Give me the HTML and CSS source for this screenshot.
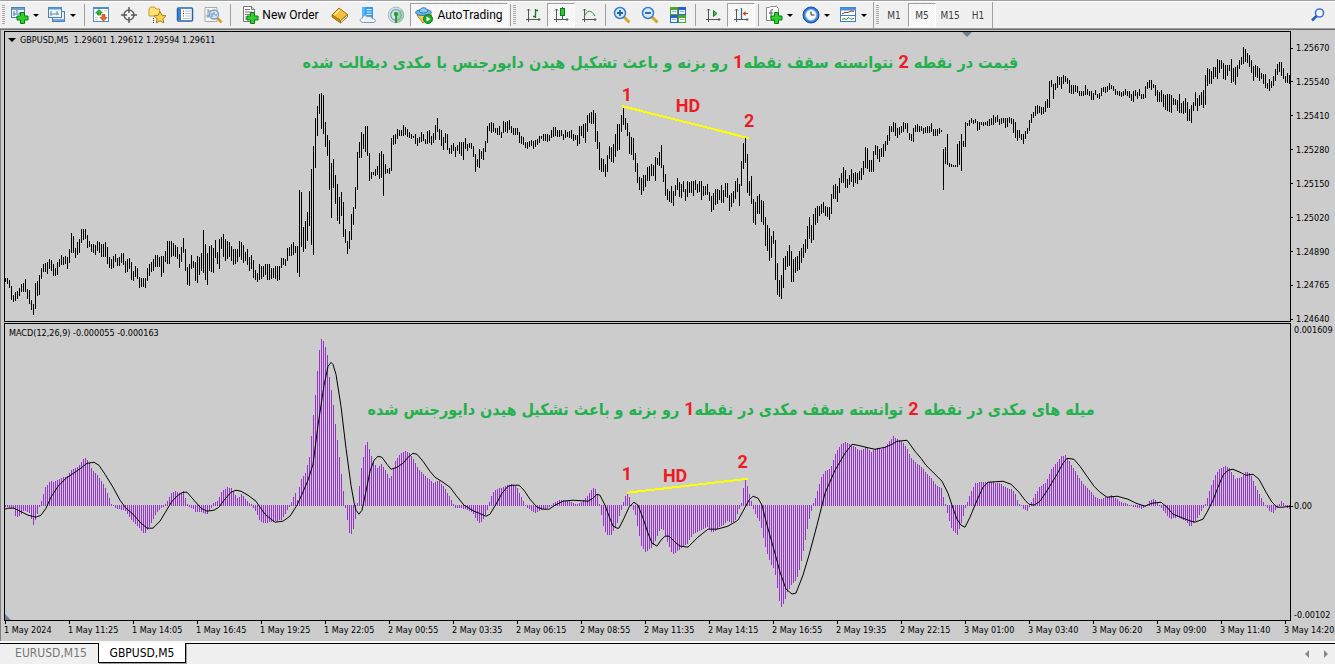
FILE: index.html
```html
<!DOCTYPE html>
<html lang="en">
<head>
<meta charset="utf-8">
<title>GBPUSD,M5</title>
<link rel="stylesheet" href="styles.css">
</head>
<body>
<header class="toolbar">
  <span class="grip"></span>
  <button class="tool drop" aria-label="New chart">
    <svg width="18" height="18" viewBox="0 0 18 18"><rect x=".5" y="1.5" width="13" height="10" fill="#eaf3fc" stroke="#4a82b8"/><path d="M1 3h12" stroke="#6fa0d0" stroke-width="2"/><path d="M3 5v5M2 8h9M6 4v3M9 6v3" stroke="#54799c" fill="none"/><path d="M9.5 6.500h4v3.500h3.500v4h-3.500v3.500h-4v-3.500H6v-4h3.500z" fill="#2fd12f" stroke="#0b7d12"/></svg>
    <i class="caret"></i></button>
  <button class="tool drop" aria-label="Profiles">
    <svg width="18" height="18" viewBox="0 0 18 18"><rect x="4.500" y="5.500" width="12" height="10" fill="#e6f1fb" stroke="#4a82b8"/><path d="M5 14h11" stroke="#76a7d8" stroke-width="2"/><rect x=".5" y="1.500" width="13" height="10" fill="#eef6fd" stroke="#4a82b8"/><path d="M1 2.500h12" stroke="#5a96d2" stroke-width="2"/><path d="M3 5v5M2 8h9M9 5v4" stroke="#6889a6" fill="none"/></svg>
    <i class="caret"></i></button>
  <span class="sep"></span>
  <button class="tool" aria-label="Market watch"><svg width="18" height="18" viewBox="0 0 18 18"><rect x="1.500" y="1.500" width="15" height="14" fill="#fff" stroke="#4f8fc9"/><path d="M2 2.500h14" stroke="#4f8fc9"/><path d="M3.500 7L7 3.500 10.500 7H8.500v2h-3V7z" fill="#2eb82e" stroke="#197519" stroke-width=".7"/><path d="M8 11.500l3.500 3.500 3.500-3.500h-2v-3h-3v3z" fill="#f0692c" stroke="#b83c10" stroke-width=".7"/><path d="M3 11.500h3M3 13.500h3M12 5h3" stroke="#ccc"/></svg></button>
  <button class="tool" aria-label="Crosshair"><svg width="18" height="18" viewBox="0 0 18 18"><circle cx="9" cy="9" r="5" fill="none" stroke="#666" stroke-width="1.600"/><path d="M9 1v6M9 11v6M1 9h6M11 9h6" stroke="#555" stroke-width="1.400"/></svg></button>
  <button class="tool" aria-label="Navigator"><svg width="20" height="18" viewBox="0 0 20 18"><path d="M2 3l1.500-2h4L9 3h3.500v7h-10.500z" fill="#ffe37a" stroke="#c99a1e"/><path d="M6.500 12v5" stroke="#222" stroke-dasharray="1 1"/><path d="M13 5.500l1.900 3.700 4.100.6-3 2.900.8 4.200-3.800-2-3.700 2 .7-4.200-3-2.900 4.200-.6z" fill="#fbd145" stroke="#b07c1a"/></svg></button>
  <button class="tool" aria-label="Data window"><svg width="18" height="18" viewBox="0 0 18 18"><rect x="1.500" y="2" width="15" height="13" rx="1" fill="#fff" stroke="#2464ae" stroke-width="1.500"/><path d="M3.500 2.500v12" stroke="#3c7fcc" stroke-width="3"/><path d="M7 5h1M7 7.500h1M7 10h1" stroke="#d22"/><path d="M9 5h6M9 7.500h6M9 10h6M7 12.500h8" stroke="#b5c3d8"/></svg></button>
  <button class="tool" aria-label="Strategy tester"><svg width="20" height="18" viewBox="0 0 20 18"><path d="M2 1.500h12v14H2z" fill="#f8f8f8" stroke="#aaa"/><path d="M5 3v9M3 10h9M5 5h7" stroke="#7b93a8"/><circle cx="11" cy="8.500" r="4.500" fill="#cfe5f8" fill-opacity=".85" stroke="#7d9dbb" stroke-width="1.300"/><path d="M9 7v4M11 6v3M13 8v2" stroke="#5588b5"/><path d="M14.500 12l4 4.500" stroke="#d39b20" stroke-width="2.600"/></svg></button>
  <span class="sep roomy"></span>
  <button class="tool order"><svg width="18" height="18" viewBox="0 0 18 18"><path d="M2.500.5h8l3 3v12h-11z" fill="#fff" stroke="#777"/><path d="M10.500.5v3h3" fill="#ddd" stroke="#777"/><path d="M4 3.500h5M4 6h7M4 8.500h5M4 11h3M4 13h3" stroke="#777"/><path d="M9.500 6.500h4v3.500h3.500v4h-3.500v3.500h-4v-3.500H6v-4h3.500z" fill="#2fd12f" stroke="#0b7d12"/></svg><span>New Order</span></button>
  <button class="tool" aria-label="MetaEditor"><svg width="18" height="18" viewBox="0 0 18 18"><path d="M1 9l7-7 8.500 6.500-7 6z" fill="#f3c13c" stroke="#a8700c"/><path d="M1 9v2l8.500 6v-2.500z" fill="#c98d17" stroke="#98650c" stroke-width=".8"/><path d="M9.500 15v2l7-6V8.500z" fill="#fff3c4" stroke="#98650c" stroke-width=".8"/><path d="M4 8.500L8.500 4" stroke="#fff0a8" stroke-width="1.500"/></svg></button>
  <button class="tool" aria-label="Cloud"><svg width="18" height="18" viewBox="0 0 18 18"><path d="M3 1h11v11H3z" fill="#2b9cf2"/><path d="M3 1h3v11H3z" fill="#53b8ff"/><path d="M7.500 3.500h5M7.500 6h5M7.500 8.500h5" stroke="#fff" fill="none"/><path d="M4.500 16.500c-4.500 0-4-4.500-1-4.500 0-3 4-3 5-1 2.500-1.500 4.500 0 4.500 1.500 4.500 0 4 4 1 4z" fill="#eff3fa" stroke="#7e95b5"/></svg></button>
  <button class="tool" aria-label="Signals"><svg width="18" height="18" viewBox="0 0 18 18"><circle cx="9" cy="9" r="7.800" fill="#d9e3ea" stroke="#a9bac4"/><circle cx="9" cy="9" r="5.300" fill="none" stroke="#6fa0b5" stroke-width="1.300"/><path d="M9 9v8a8 8 0 0 0 5-14z" fill="#7cc27c" fill-opacity=".55"/><circle cx="9" cy="8" r="2.200" fill="#2f9a3c"/><path d="M9 9v8" stroke="#2f9a3c" stroke-width="2"/></svg></button>
  <button class="tool auto pressed"><svg width="18" height="18" viewBox="0 0 18 18"><path d="M2 9l6 8 9-8z" fill="#f2cf4e" stroke="#b78a15"/><ellipse cx="8.500" cy="6.500" rx="8" ry="3" fill="#6db5e6" stroke="#2c78b0"/><path d="M4.500 5.500c0-5 8-5 8 0 0 1.800-8 1.800-8 0z" fill="#8ccbf2" stroke="#2c78b0"/><circle cx="13" cy="13" r="4.500" fill="#1fae2c" stroke="#0b7a15"/><path d="M11.500 10.500l4 2.500-4 2.500z" fill="#fff"/></svg><span>AutoTrading</span></button>
  <span class="sep"></span>
  <span class="grip spaced"></span>
  <button class="tool" aria-label="Bar chart"><svg width="18" height="18" viewBox="0 0 18 18"><path d="M4.500 3v13M2 13.500h14M3 4.500l1.500-1.500 1.500 1.500M14.500 12l1.500 1.500-1.500 1.500" stroke="#555" fill="none"/><path d="M11.500 3v9M11 4.500h3M9 10.500h3" stroke="#137c1f" stroke-width="1.300"/></svg></button>
  <button class="tool pressed" aria-label="Candlesticks"><svg width="18" height="18" viewBox="0 0 18 18"><path d="M4.500 3v13M2 13.500h14M3 4.500l1.500-1.500 1.500 1.500M14.500 12l1.500 1.500-1.500 1.500" stroke="#555" fill="none"/><path d="M10.500 1v12" stroke="#137c1f"/><rect x="8.500" y="2.500" width="4" height="7" fill="#25c936" stroke="#137c1f"/></svg></button>
  <button class="tool" aria-label="Line chart"><svg width="18" height="18" viewBox="0 0 18 18"><path d="M4.500 3v13M2 13.500h14M3 4.500l1.500-1.500 1.500 1.500M14.500 12l1.500 1.500-1.500 1.500" stroke="#555" fill="none"/><path d="M4 11c3-7 7-8 11-1" stroke="#23953a" fill="none"/></svg></button>
  <span class="sep"></span>
  <button class="tool" aria-label="Zoom in"><svg width="18" height="18" viewBox="0 0 18 18"><path d="M11 11l5.500 5.500" stroke="#d6a62b" stroke-width="3"/><circle cx="7" cy="7" r="5.500" fill="#d5ebfc" stroke="#3a7cc5" stroke-width="1.500"/><path d="M4 7h6M7 4v6" stroke="#1d60b3" stroke-width="1.800"/></svg></button>
  <button class="tool" aria-label="Zoom out"><svg width="18" height="18" viewBox="0 0 18 18"><path d="M11 11l5.500 5.500" stroke="#d6a62b" stroke-width="3"/><circle cx="7" cy="7" r="5.500" fill="#d5ebfc" stroke="#3a7cc5" stroke-width="1.500"/><path d="M4 7h6" stroke="#1d60b3" stroke-width="1.800"/></svg></button>
  <button class="tool" aria-label="Tile windows"><svg width="18" height="18" viewBox="0 0 18 18"><path d="M1 1h8v8H1zM9 9h8v8H9z" fill="#4fa524"/><path d="M9 1h8v8H9zM1 9h8v8H1z" fill="#2b62d0"/><path d="M2 4h6v4H2zM10 4h6v4h-6zM2 12h6v4H2zM10 12h6v4h-6z" fill="#eef5fb"/><path d="M3 5.500h4M11 5.500h4M3 13.500h4M11 13.500h4" stroke="#8fb3c0"/></svg></button>
  <span class="sep roomy"></span>
  <button class="tool" aria-label="Auto scroll"><svg width="18" height="18" viewBox="0 0 18 18"><path d="M4.500 3v13M2 13.500h14M3 4.500l1.500-1.500 1.500 1.500M14.500 12l1.500 1.500-1.500 1.500" stroke="#555" fill="none"/><path d="M9.500 4.500l3.500 3-3.500 3z" fill="#3bd04b" stroke="#137c1f"/></svg></button>
  <button class="tool pressed" aria-label="Chart shift"><svg width="18" height="18" viewBox="0 0 18 18"><path d="M4.500 3v13M2 13.500h14M3 4.500l1.500-1.500 1.500 1.500M14.500 12l1.500 1.500-1.500 1.500" stroke="#555" fill="none"/><path d="M9.500 2v11" stroke="#1c6bb0" stroke-width="1.300"/><path d="M11 7.500h5" stroke="#b33a10"/><path d="M10.500 7.500l3-2.500v5z" fill="#d0410e"/></svg></button>
  <span class="sep roomy"></span>
  <button class="tool drop" aria-label="Indicators"><svg width="18" height="18" viewBox="0 0 18 18"><path d="M1.500 1.500h3l1-1h6l2 2v12h-12z" fill="#fff" stroke="#888"/><path d="M8 4c-2-1-2 0-2 2v6M4 7h4" stroke="#555" fill="none"/><path d="M9.500 6.500h4v3.500h3.500v4h-3.500v3.500h-4v-3.500H6v-4h3.500z" fill="#2fd12f" stroke="#0b7d12"/></svg><i class="caret"></i></button>
  <button class="tool drop" aria-label="Periods"><svg width="18" height="18" viewBox="0 0 18 18"><circle cx="9" cy="9" r="8" fill="#2d7fdb" stroke="#1c4f96"/><circle cx="9" cy="9" r="5.500" fill="#f6faff" stroke="#8bb9ec"/><path d="M9 5.500V9h3.500" stroke="#333" fill="none"/></svg><i class="caret"></i></button>
  <button class="tool drop" aria-label="Templates"><svg width="18" height="18" viewBox="0 0 18 18"><rect x="1.500" y="1.500" width="15" height="14" fill="#fff" stroke="#3f7fc0"/><path d="M1 3h16" stroke="#4a91dc" stroke-width="3"/><path d="M2 9.500h14" stroke="#3f7fc0"/><path d="M3 8l3-1.500h3l3-1.500 3 .5" stroke="#a0301c" fill="none"/><path d="M3 13.500l2-1 2 1 3-2 2 2 3-1.500" stroke="#218c2c" fill="none"/></svg><i class="caret"></i></button>
  <span class="sep flush"></span>
  <span class="grip"></span>
  <button class="tool period">M1</button>
  <button class="tool period pressed">M5</button>
  <button class="tool period">M15</button>
  <button class="tool period">H1</button>
  <span class="sep flush"></span>
  <button class="tool search" aria-label="Search"><svg width="16" height="16" viewBox="0 0 16 16"><circle cx="9.500" cy="6" r="4" fill="#f6faff" stroke="#3b75d8" stroke-width="1.600"/><path d="M6.500 9L2 13.500" stroke="#2c5fc4" stroke-width="2.600"/></svg></button>
</header>

<main class="workspace">
  <section class="plot price" aria-label="Price chart">
    <svg class="canvas" id="price" viewBox="0 0 1285 289" preserveAspectRatio="none"></svg>
    <div class="title"><i class="caret"></i><span>GBPUSD,M5&nbsp; 1.29601 1.29612 1.29594 1.29611</span></div>
    <i class="shift-mark"></i>
    <p class="note note-price" dir="rtl" lang="fa">قیمت در نقطه <b>2</b> نتوانسته سقف نقطه<b>1</b> رو بزنه و باعث تشکیل هیدن دایورجنس با مکدی دیفالت شده</p>
    <b class="mark p1">1</b><b class="mark p-hd">HD</b><b class="mark p2">2</b>
  </section>
  <div class="scale price-scale">
    <span>1.25670</span><span>1.25540</span><span>1.25410</span><span>1.25280</span><span>1.25150</span><span>1.25020</span><span>1.24890</span><span>1.24765</span><span>1.24640</span>
  </div>
  <section class="plot macd" aria-label="MACD">
    <svg class="canvas" id="macd" viewBox="0 0 1285 296" preserveAspectRatio="none"></svg>
    <div class="title macd-title">MACD(12,26,9) -0.000055 -0.000163</div>
    <p class="note note-macd" dir="rtl" lang="fa">میله های مکدی در نقطه <b>2</b> توانسته سقف مکدی در نقطه<b>1</b> رو بزنه و باعث تشکیل هیدن دایورجنس شده</p>
    <b class="mark m1">1</b><b class="mark m-hd">HD</b><b class="mark m2">2</b>
    <i class="corner-mark"></i>
  </section>
  <div class="scale macd-scale">
    <span>0.001609</span><i class="upper"></i><span class="zero">0.00</span><i class="lower"></i><span>-0.00102</span>
  </div>
  <div class="times">
    <span>1 May 2024</span><span>1 May 11:25</span><span>1 May 14:05</span><span>1 May 16:45</span><span>1 May 19:25</span><span>1 May 22:05</span><span>2 May 00:55</span><span>2 May 03:35</span><span>2 May 06:15</span><span>2 May 08:55</span><span>2 May 11:35</span><span>2 May 14:15</span><span>2 May 16:55</span><span>2 May 19:35</span><span>2 May 22:15</span><span>3 May 01:00</span><span>3 May 03:40</span><span>3 May 06:20</span><span>3 May 09:00</span><span>3 May 11:40</span><span>3 May 14:20</span>
  </div>
</main>

<nav class="tabs" aria-label="Charts">
  <button class="tab">EURUSD,M15</button>
  <button class="tab active">GBPUSD,M5</button>
  <span class="arrows"><button class="arrow left" aria-label="Previous"></button><button class="arrow right" aria-label="Next"></button></span>
</nav>
<script src="chart.js"></script>
</body>
</html>
```
FILE: styles.css
```css
* { box-sizing: border-box; }
body {
  margin: 0;
  height: 100vh;
  display: flex;
  flex-direction: column;
  overflow: hidden;
  background: #f0f0f0;
  color: #000;
  font-family: "DejaVu Sans Condensed", "DejaVu Sans", sans-serif;
  font-size: 9px;
}
button {
  border: 0;
  padding: 0;
  background: none;
  color: inherit;
  font: inherit;
}

/* toolbar */
.toolbar {
  display: flex;
  align-items: center;
  height: 30px;
  padding-left: 2px;
  border-top: 1px solid #a0a0a0;
  border-bottom: 1px solid #696969;
  box-shadow: inset 0 -1px #a0a0a0, inset 0 1px #fff;
  flex: none;
}
.grip {
  width: 4px;
  height: 20px;
  background: repeating-linear-gradient(#a8a8a8 0 1px, transparent 1px 2px);
  background-size: 3px 100%;
  background-repeat: no-repeat;
}
.grip.spaced { margin-right: 2px; }
.sep {
  width: 1px;
  height: 22px;
  margin: 0 2px;
  background: #a0a0a0;
}
.sep.roomy { margin: 0 3px; }
.sep.flush { margin: 0 2px 0 0; height: 26px; }
.tool {
  display: flex;
  align-items: center;
  justify-content: center;
  width: 28px;
  height: 24px;
  white-space: nowrap;
  flex: none;
}
.tool svg { flex: none; }
.drop {
  width: 37px;
  gap: 4px;
  justify-content: flex-start;
  padding-left: 3px;
}
.grip + .drop { margin-left: 2px; }
.order, .auto { font-size: 12px; gap: 4px; font-family: "Roboto", sans-serif; }
.order { width: 92px; gap: 3px; }
.auto { width: 98px; }
.pressed {
  background: repeating-conic-gradient(#fff 0 25%, #f0f0f0 0 50%) 0 0 / 2px 2px;
  background-clip: content-box;
  border: 1px solid #a0a0a0;
  border-right-color: #fff;
  border-bottom-color: #fff;
}
.period { font-size: 10px; color: #404040; }
.search { margin-left: auto; margin-right: 3px; }
.caret {
  width: 0;
  height: 0;
  border: 3px solid transparent;
  border-top: 3px solid #000;
  border-bottom: 0;
}

/* charts */
.workspace {
  flex: 1;
  min-height: 0;
  display: grid;
  grid-template-columns: 1fr 44px;
  grid-template-rows: 291fr 298fr 20px;
  padding: 1px 0 0 3px;
  border-left: 1px solid #808080;
  background: #ccc;
  overflow: hidden;
}
.plot {
  position: relative;
  border: 1px solid #000;
  min-height: 0;
}
.macd { margin-top: 1px; }
.canvas {
  position: absolute;
  inset: 0;
  width: 100%;
  height: 100%;
  shape-rendering: crispEdges;
}
.title {
  position: absolute;
  left: 3px;
  top: 2px;
  display: flex;
  align-items: center;
  gap: 4px;
  line-height: 12px;
  white-space: nowrap;
}
.title .caret { border-width: 4px 4px 0; }
.macd-title { left: 4px; top: 3px; }
.note {
  position: absolute;
  margin: 0;
  transform: translateX(-50%);
  color: #22b14c;
  font: bold 16px/24px "DejaVu Sans Condensed", "DejaVu Sans", sans-serif;
  white-space: nowrap;
}
.note b, .mark {
  color: #ed1c24;
  font-family: "Liberation Sans Narrow", "Roboto", sans-serif;
  font-size: 18px;
  font-weight: bold;
  line-height: 20px;
}
.note-price { left: 51%; top: 6.5%; }
.note-macd { left: 56.5%; top: 25%; }
.mark { position: absolute; }
.p1 { left: 48%; top: 18.3%; }
.p-hd { left: 52.2%; top: 22%; }
.p2 { left: 57.5%; top: 27.3%; }
.m1 { left: 48%; top: 47.3%; }
.m-hd { left: 51.2%; top: 48%; }
.m2 { left: 57%; top: 43%; }
.shift-mark {
  position: absolute;
  left: 74.5%;
  top: 0;
  border: 5px solid transparent;
  border-top-color: #708090;
  border-bottom: 0;
}
.corner-mark {
  position: absolute;
  left: 0;
  bottom: 0;
  border: 3px solid transparent;
  border-left-color: #708090;
  border-bottom-color: #708090;
}

/* scales */
.scale {
  display: flex;
  flex-direction: column;
  line-height: 12px;
  white-space: nowrap;
}
.price-scale {
  justify-content: space-between;
  padding-top: 11px;
  margin-bottom: -3px;
}
.price-scale span { display: flex; align-items: center; gap: 3px; }
.price-scale span::before, .zero::before { content: ""; width: 2px; height: 1px; background: #000; }
.macd-scale { padding-left: 3px; padding-top: 2px; }
.zero { display: flex; align-items: center; gap: 1px; margin-left: -3px; }
.upper { flex: 163; }
.lower { flex: 96; }
.times {
  display: grid;
  grid-template-columns: repeat(20, 1fr) 7px;
  white-space: nowrap;
}
.times span { position: relative; padding-top: 3px; line-height: 12px; }
.times span::before {
  content: "";
  position: absolute;
  left: 1px;
  top: 0;
  width: 1px;
  height: 3px;
  background: #000;
}

/* tabs */
.tabs {
  flex: none;
  display: flex;
  height: 23px;
  border-top: 2px solid #f8f8f8;
  padding-left: 4px;
  box-shadow: inset 0 1px #000;
  font-size: 12px;
}
.tab { width: 94px; height: 20px; color: #777; }
.active {
  width: 88px;
  background: #fff;
  color: #000;
  border: 1px solid #000;
  border-top: 0;
  box-shadow: 1px 1px #a0a0a0;
}
.arrows { display: flex; margin-left: auto; gap: 15px; padding-right: 7px; align-items: center; }
.arrow { border: 4px solid transparent; width: 4px; height: 8px; }
.left { border-left: 0; border-right-color: #888; }
.right { border-right: 0; border-left-color: #888; }
```
FILE: chart.js
```js
// High-low pairs, one per bar, in plot units measured from y = 32.
const BARS = `278-281 278-283 280-287 286-299 295-301 292-300 291-298 288-295 284-291 283-291 279-291 289-298 290-303 300-309 304-314 283-308 281-295 275-294 268-278 264-271 263-271 262-273 259-268 260-270 264-275 268-275 262-274 259-266 255-264 257-264 256-263 257-268 249-262 233-252 236-252 248-257 242-254 239-252 229-242 229-239 229-238 235-247 241-246 244-251 244-252 245-254 241-250 242-252 244-256 244-256 242-256 247-263 257-267 259-268 256-267 254-261 258-265 257-265 253-262 253-264 261-272 259-271 258-268 262-279 271-280 266-276 268-278 277-287 278-286 278-286 278-287 268-280 264-275 262-271 259-270 255-266 255-266 257-266 256-276 256-272 251-261 241-263 241-263 241-256 243-255 245-256 247-258 254-267 247-261 238-252 249-270 267-284 264-285 255-268 261-267 262-280 256-282 257-274 253-270 230-272 244-279 253-284 246-270 245-271 248-272 240-257 252-263 239-268 237-248 234-256 239-260 241-258 242-256 246-260 249-264 249-263 249-261 241-256 242-259 245-262 252-260 249-264 257-270 255-268 260-277 270-279 273-281 264-279 266-278 266-276 264-274 264-279 264-279 268-278 268-277 266-278 266-280 266-279 258-267 258-264 259-265 248-260 247-255 244-255 242-254 246-252 246-272 190-276 192-246 227-251 221-248 212-240 191-225 169-244 146-254 118-167 106-135 94-113 93-128 95-133 122-146 135-155 140-189 163-217 159-187 175-203 184-220 197-223 192-215 202-236 229-242 241-253 231-248 214-239 207-224 187-208 152-189 142-157 132-157 134-148 126-151 126-155 153-180 172-178 172-174 169-175 166-174 153-178 151-177 154-195 164-173 169-172 168-173 138-170 135-144 134-143 129-138 130-135 130-135 125-135 127-134 129-136 132-137 134-138 136-137 134-143 138-145 137-142 132-141 134-140 139-143 131-143 130-142 136-144 133-142 125-139 118-131 129-139 130-145 137-149 133-142 134-149 148-153 145-153 143-150 147-156 145-150 142-153 142-155 142-159 138-148 144-150 143-147 143-148 146-156 154-171 159-166 149-167 151-158 148-159 141-151 126-142 123-130 122-132 123-131 128-132 128-134 126-134 132-137 121-132 122-131 121-132 120-129 126-132 128-134 128-134 128-134 132-142 136-143 137-144 142-147 142-148 141-146 140-145 141-148 140-146 139-144 136-142 136-138 134-140 134-140 134-141 135-140 130-137 127-136 127-135 130-136 130-136 130-135 134-139 130-137 132-136 131-137 130-138 134-140 135-139 135-145 126-143 126-135 124-137 123-142 115-131 113-122 112-123 110-123 113-141 131-148 142-169 158-171 159-171 164-176 155-171 146-158 147-161 144-162 134-156 124-150 124-149 115-131 107-124 118-129 123-135 132-153 137-154 138-159 153-171 163-182 177-189 178-194 175-190 175-186 167-180 166-180 164-175 165-175 157-180 158-164 152-165 145-167 165-181 174-195 189-199 191-201 186-202 191-205 185-195 178-189 182-196 184-197 181-191 189-200 181-196 182-192 181-192 181-195 180-189 184-192 181-191 181-199 186-195 186-194 184-194 192-200 196-211 193-209 189-204 189-203 190-199 185-202 190-202 183-196 183-197 195-210 193-206 191-202 181-198 178-191 184-205 161-185 143-168 138-162 154-192 181-195 176-203 199-222 202-224 196-213 194-213 200-221 201-224 217-245 225-250 228-260 236-257 231-243 240-279 263-294 280-296 275-298 258-287 256-269 251-266 245-265 251-281 259-281 257-272 256-270 251-269 248-262 244-257 239-252 226-248 217-238 225-242 214-239 208-224 206-222 206-215 204-213 202-212 206-215 207-216 207-219 194-213 185-198 184-198 186-201 178-192 173-182 167-182 170-187 179-187 175-184 169-181 173-186 172-182 173-183 171-179 168-179 161-174 147-167 148-168 160-171 160-171 151-171 145-154 146-158 149-161 148-156 144-156 141-150 135-144 126-140 126-131 122-131 123-135 128-137 127-134 126-132 122-131 123-128 123-132 133-139 134-140 128-141 125-131 124-131 126-131 126-130 128-133 127-132 126-132 126-132 123-131 129-135 129-135 129-135 128-133 130-131 149-189 147-163 134-164 163-166 164-166 165-166 165-166 144-166 141-164 134-170 141-146 122-146 123-125 120-125 118-122 120-123 119-122 121-130 122-129 122-124 122-125 122-124 121-125 119-125 118-124 115-124 117-122 115-121 119-124 118-123 118-122 118-127 118-126 117-122 118-123 119-132 122-137 130-140 130-137 134-139 134-143 131-138 128-133 120-130 114-122 112-117 106-115 105-113 106-112 107-114 107-113 101-111 99-107 81-107 80-86 84-98 83-89 76-87 77-84 77-88 75-83 76-81 78-83 80-92 85-93 85-93 85-91 86-92 91-95 91-95 91-95 85-94 89-94 91-95 91-99 93-99 90-94 94-97 93-98 88-95 87-91 87-92 86-91 83-89 85-88 86-90 89-94 91-94 91-95 92-96 91-95 89-94 91-95 91-97 94-100 91-101 90-95 92-98 89-95 94-98 94-98 86-97 82-88 80-87 80-89 84-87 85-95 90-101 92-101 90-101 94-106 95-109 94-110 94-111 95-112 98-104 99-104 100-110 94-112 103-112 101-113 98-112 102-120 109-120 105-122 102-110 92-105 98-110 95-105 92-104 90-107 75-104 68-85 69-83 71-83 67-78 67-76 59-78 60-72 60-68 63-78 65-79 65-75 65-70 59-82 68-81 67-84 65-76 60-68 57-64 47-63 49-61 53-62 55-66 60-72 66-80 65-76 66-77 68-80 73-78 74-83 74-87 83-88 79-90 81-87 76-85 69-80 64-74 62-71 62-75 68-78 76-82 73-82 75-83`;

// MACD histogram tips and signal line, as x:y points.
const HIST = `5:506 13:507 15:515 18:516 24:509 29:512 33:524 37:513 39:506 42:498 45:487 50:481 54:482 61:478 67:476 71:470 78:467 84:457 88:461 92:470 98:476 104:485 108:495 111:504 114:506 117:508 124:509 128:514 132:520 138:526 144:533 148:528 152:520 156:512 160:508 166:503 171:493 175:491 179:493 183:491 186:501 188:506 192:507 195:511 202:511 206:514 210:509 213:503 217:501 221:492 227:487 231:488 236:497 238:498 241:494 246:500 252:505 256:512 260:521 264:522 271:521 276:520 281:519 285:513 290:504 295:493 297:500 300:480 305:473 309:457 312:425 315:395 317:371 319:350 321:339 323:341 325:347 327:355 329:377 332:396 335:424 338:448 342:482 344:500 346:513 349:532 351:533 354:525 357:503 359:486 361:468 365:445 367:442 370:453 374:463 377:468 381:464 386:472 390:480 395:461 400:453 405:451 410:454 415:463 418:469 424:475 433:483 438:480 443:486 449:496 453:504 455:507 460:507 467:509 472:511 475:517 478:522 482:520 486:512 490:498 494:490 500:488 506:485 512:484 517:488 521:497 525:505 530:509 535:512 540:509 547:507 552:504 556:501 560:500 568:501 576:504 580:503 587:496 591:490 594:487 597:494 600:509 603:525 606:534 611:534 616:525 620:512 623:502 626:493 629:497 632:507 635:514 638:530 641:545 645:551 651:547 655:540 660:527 663:529 667:541 672:553 676:551 680:548 687:543 692:534 700:529 708:526 712:532 718:527 723:524 727:520 731:522 735:519 738:510 741:503 743:488 745:479 747:486 750:498 753:508 757:517 760:522 764:542 768:556 770:562 774:568 776:580 779:600 781:606 784:602 787:591 791:584 796:579 800:565 804:545 808:522 811:510 813:503 816:495 821:477 826:470 830:469 835:454 840:445 844:442 849:444 854:446 860:451 866:446 871:452 876:448 880:449 884:448 889:441 893:436 897:439 902:442 906:447 911:458 916:463 921:467 926:473 931:478 936:485 941:488 944:502 946:506 947:512 951:527 954:531 957:534 961:522 965:507 967:502 970:493 975:483 980:482 990:482 1000:483 1006:488 1012:489 1015:494 1018:503 1022:506 1024:509 1027:510 1031:502 1035:494 1039:487 1046:482 1051:469 1056:463 1061:456 1065:455 1069:461 1073:468 1079:478 1083:484 1089:490 1094:496 1100:499 1106:497 1112:495 1118:500 1124:503 1133:506 1142:508 1146:505 1150:500 1154:499 1159:505 1164:511 1170:518 1178:516 1185:520 1190:526 1195:520 1200:512 1206:502 1210:487 1215:475 1220:468 1224:466 1229:468 1235:479 1241:477 1246:471 1250:474 1256:488 1262:500 1266:506 1270:511 1273:512 1277:506 1281:501 1285:505 1289:508`;
const SIGNAL = `5:509 8:508 14:508 20:511 28:515 36:517 41:515 46:508 51:497 58:486 66:478 75:472 82:467 87:463 94:462 99:465 105:474 113:487 120:500 126:508 133:514 140:522 147:528 153:528 160:521 166:511 172:501 178:495 183:492 187:492 194:500 201:508 207:511 214:510 219:507 224:500 231:492 236:490 241:491 248:495 256:501 260:507 265:514 271:519 275:522 283:521 290:516 297:505 302:494 308:480 313:464 318:425 324:385 328:366 331:362 333:364 336:374 341:406 346:448 351:485 354:502 356:510 359:514 362:510 366:491 370:471 374:460 378:456 382:457 387:464 391:469 397:467 403:463 408:457 413:453 417:454 423:461 430:471 435:477 443:482 450:487 456:495 464:505 474:511 486:516 490:514 496:504 502:493 508:486 512:485 519:485 524:490 530:499 537:507 543:509 549:509 555:505 563:501 573:500 588:501 593:498 597:494 600:495 605:505 609:516 613:526 617:528 619:528 624:518 629:507 634:502 638:505 643:518 648:533 652:543 657:546 661:540 665:536 669:536 675:542 680:546 688:547 692:543 698:537 708:529 717:529 728:526 738:520 743:511 749:500 753:496 758:498 762:505 767:525 773:546 780:572 786:589 792:594 796:593 803:575 809:555 817:525 825:493 835:470 845:453 852:444 858:445 866:447 875:449 885:447 892:444 897:441 907:440 910:444 915:451 921:458 926:465 935:474 942:481 948:493 953:508 957:519 961:525 965:527 970:517 977:500 983:487 988:482 1003:481 1011:484 1019:492 1025:500 1029:504 1034:505 1040:501 1048:489 1057:474 1063:463 1067:458 1074:459 1080:466 1087:476 1094:486 1100:492 1107:497 1117:496 1128:499 1136:503 1145:506 1152:503 1161:502 1167:507 1173:514 1183:518 1191:521 1195:522 1203:519 1207:512 1213:500 1218:487 1223:475 1228:470 1233:469 1240:472 1246:475 1253:474 1259:479 1266:492 1272:502 1277:507 1283:507 1290:506`;

const X0 = 5;
const PRICE_TOP = 32;
const MACD_TOP = 324;
const ZERO = 505;

const points = text => text.trim().split(/\s+/).map(p => p.split(":").map(Number));

function path(parent, attributes) {
  const node = document.createElementNS("http://www.w3.org/2000/svg", "path");
  for (const [name, value] of Object.entries(attributes)) node.setAttribute(name, value);
  parent.appendChild(node);
}
const bar = (x, top, bottom) => `M${x} ${top}h1V${bottom}h-1z`;

const price = document.getElementById("price");
path(price, {
  fill: "#000",
  d: BARS.split(/\s+/).map((pair, i) => {
    const [high, low] = pair.split("-").map(Number);
    return bar(i * 2, high - PRICE_TOP, low - PRICE_TOP + 1);
  }).join("")
});
path(price, { fill: "none", stroke: "#ff0", "stroke-width": 2, d: "M617 74L744 106" });

const hist = points(HIST);
let segment = 0;
let bars = "";
for (let x = X0; x <= 1289; x += 2) {
  while (segment < hist.length - 2 && hist[segment + 1][0] < x) segment++;
  const [xa, ya] = hist[segment];
  const [xb, yb] = hist[segment + 1];
  const y = Math.round(ya + (yb - ya) * (x - xa) / (xb - xa));
  bars += bar(x - X0, Math.min(y, ZERO) - MACD_TOP, Math.max(y, ZERO) - MACD_TOP + 1);
}
const macd = document.getElementById("macd");
path(macd, { fill: "#9932cc", d: bars });
path(macd, {
  fill: "none", stroke: "#000", "stroke-width": 1,
  d: "M" + points(SIGNAL).map(([x, y]) => `${x - X0} ${y - MACD_TOP + 0.5}`).join("L")
});
path(macd, { fill: "none", stroke: "#ff0", "stroke-width": 2, d: "M622 169L743 155" });
```
